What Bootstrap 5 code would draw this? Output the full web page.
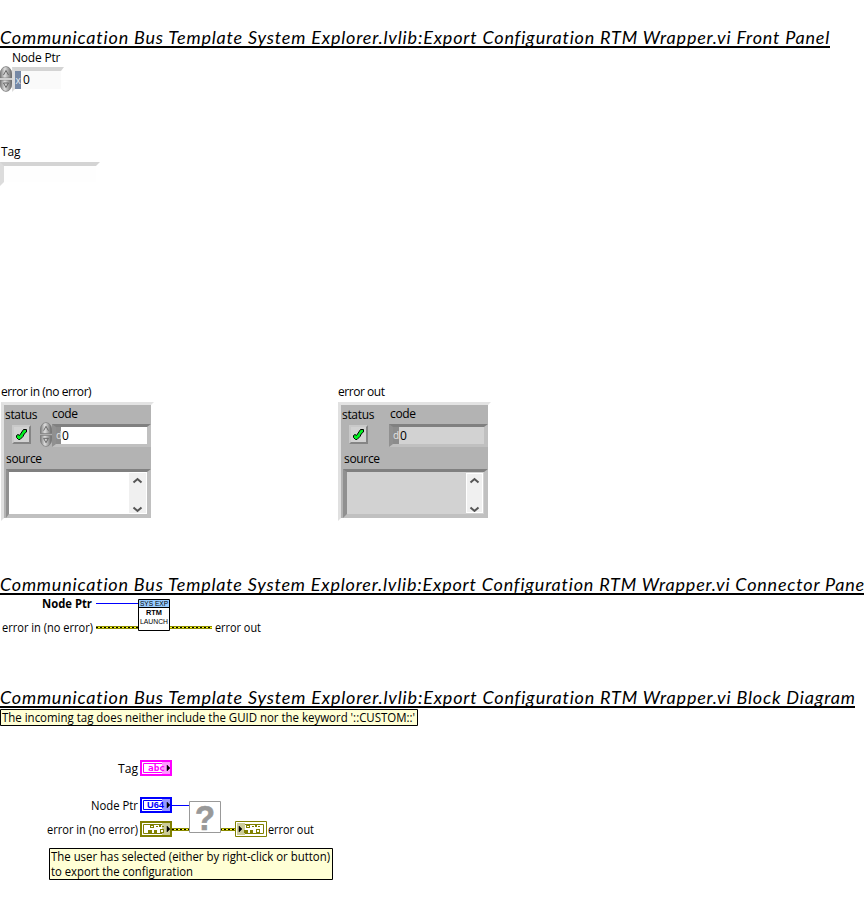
<!DOCTYPE html>
<html lang="en">
<head>
<meta charset="utf-8">
<title>Export Configuration RTM Wrapper.vi</title>
<link href="https://cdn.jsdelivr.net/npm/bootstrap@5.3.0/dist/css/bootstrap.min.css" rel="stylesheet">
<style>
body{width:864px;height:908px;overflow:hidden;background:#fff;color:#000;font:12px/16px "Open Sans","Noto Sans",sans-serif;letter-spacing:-.2px}
.vi-title{font:italic 18px/22px Lato,sans-serif;height:22px;border-bottom:2px solid #000;white-space:nowrap;width:max-content}
.t-front{width:830px;letter-spacing:.808px}
.t-conn{width:864px;letter-spacing:.795px}
.t-block{width:855px;letter-spacing:.808px}
.front{height:526px}
.sunk-light{border:4px solid;border-color:#d4d4d4 #fff #fff #dcdcdc}
.ptr-field{width:52px;height:25px;border-width:4px 3px 3px;background:#fafafa;margin-top:1px}
.tag-field{width:100px;height:24px;background:#fefefe}
.radix{width:6px;color:#e4e9f2;background:#7588a5;line-height:18px;font-size:10px;text-align:center}
.val{line-height:17px;padding-left:2px}
.errors{letter-spacing:-.45px}
.cluster{width:153px;height:119px;border:3px solid;border-color:#e3e3e3 #fff #fff #e0e0e0;background:#b3b3b3;display:grid;grid-template-columns:48px 99px;grid-template-rows:19px 23px 22px 49px;letter-spacing:-.32px}
.sunk{border:3px solid;border-color:#808080 #c0c0c0 #c0c0c0 #909090}
.code-field{border-width:3px 4px 3px 4px;background:#fff}
.code-field .radix{width:5px;background:#8c8c8c;color:#e4e4e4;line-height:17px}
.source-field{grid-column:1/3;margin-left:2px;border-width:3px 4px 4px 3px;background:#fff}
.readonly .code-field,.readonly .source-field{background:#d2d2d2}
.readonly .source-field{border-left-width:4px}
.readonly .code-field .radix{width:6px}
.led{width:19px;height:19px;border:2px solid;border-color:#c9c9c9 #858585 #858585 #c9c9c9;background:#d2d2d2;margin-left:8px}
.scroller{width:17px;background:#f0f0f0;margin:1px 1px 1px 0}
.readonly .scroller{outline:1px solid #fff;outline-offset:-1px}
svg{display:block}
svg text{fill:#000;letter-spacing:0}
.pix{font-family:"Liberation Sans","DejaVu Sans",sans-serif;font-weight:bold}
</style>
<script src="https://cdn.jsdelivr.net/npm/bootstrap@5.3.0/dist/js/bootstrap.bundle.min.js"></script>
</head>
<body>
<svg width="0" height="0" class="position-absolute">
<defs>
<linearGradient id="metal"><stop offset="0" stop-color="#777"/><stop offset=".4" stop-color="#dedede"/><stop offset="1" stop-color="#666"/></linearGradient>
<symbol id="spin" viewBox="0 0 12 26"><path d="M0 12V9Q0 4 3 1.500Q6-.5 9 1.500Q12 4 12 9v3zM0 14h12v3q0 5-3 7.500q-3 2-6 0Q0 22 0 17z" fill="url(#metal)" stroke="#777" stroke-width=".7"/><path d="M3.500 9L6 4.500 8.500 9M3.500 17h5L6 21.500z" fill="none" stroke="#666"/></symbol>
<symbol id="check" viewBox="0 0 15 15"><path d="M2.500 8.500L4 7.500 5.500 8.500 9.500 2.500H12.500V5L10.500 6.500 9 9.500 6 12.500H4.500L2.500 10.500z" fill="#00f020" stroke="#000"/></symbol>
<symbol id="arrows" viewBox="0 0 17 40"><path d="M4.500 9.500L8.500 6l4 3.500M4.500 34.500l4 3.500 4-3.500" fill="none" stroke="#555" stroke-width="2"/></symbol>
<pattern id="errwire" width="4" height="3" patternUnits="userSpaceOnUse"><path d="M0 0h4v3H0z" fill="#8a8a00"/><path d="M0 1h2v1H0z" fill="#000"/><path d="M2 1h2v1H2z" fill="#ffff20"/></pattern>
<g id="clusterglyph" fill="#808000"><path d="M10 4h4v3h-4zM8 9h4v3H8zM14 9h3v3h-3zM16 5h2v1h-2zM19 4h2v2h-2zM22 5h2v1h-2zM20 8h4v4h-4z"/><path d="M11 5h2v1h-2zM21 9h2v2h-2z" fill="#fff"/></g>
</defs>
</svg>
<main>
<section class="front overflow-hidden">
  <h2 class="vi-title t-front mb-0" style="margin-top:26px">Communication Bus Template System Explorer.lvlib:Export Configuration RTM Wrapper.vi Front Panel</h2>
  <div style="padding:2px 0 0 12px">Node Ptr</div>
  <div class="d-flex">
    <svg width="12" height="26"><use href="#spin"/></svg>
    <div class="sunk-light ptr-field d-flex"><span class="radix">x</span><span class="val">0</span></div>
  </div>
  <div style="padding:52px 0 0 1px">Tag</div>
  <div class="sunk-light tag-field" style="margin-top:2px"></div>
  <div class="d-flex errors" style="margin-top:198px;gap:184px;padding-left:1px">
    <div><div>error in (no error)</div>
      <div class="cluster" style="margin-top:2px">
        <div style="padding:2px 0 0 1px">status</div><div style="padding-top:1px">code</div>
        <div class="d-flex"><div class="led" style="margin-top:1px"><svg width="15" height="15"><use href="#check"/></svg></div><svg width="12" height="25" style="margin:-2px 0 0 9px"><use href="#spin"/></svg></div>
        <div class="sunk code-field d-flex"><span class="radix">d</span><span class="val" style="padding-left:1px">0</span></div>
        <div style="padding:4px 0 0 2px">source</div><div></div>
        <div class="sunk source-field d-flex justify-content-end"><svg class="scroller" height="40"><use href="#arrows" width="17" height="40"/></svg></div>
      </div></div>
    <div class="readonly"><div>error out</div>
      <div class="cluster" style="margin-top:2px">
        <div style="padding:2px 0 0 1px">status</div><div style="padding:1px 0 0 1px">code</div>
        <div><div class="led" style="margin-top:1px"><svg width="15" height="15"><use href="#check"/></svg></div></div>
        <div class="sunk code-field d-flex"><span class="radix">d</span><span class="val" style="padding-left:1px">0</span></div>
        <div style="padding:4px 0 0 3px">source</div><div></div>
        <div class="sunk source-field d-flex justify-content-end"><svg class="scroller" height="40"><use href="#arrows" width="17" height="40"/></svg></div>
      </div></div>
  </div>
</section>
<section>
  <h2 class="vi-title t-conn mb-0" style="margin-top:47px">Communication Bus Template System Explorer.lvlib:Export Configuration RTM Wrapper.vi Connector Pane</h2>
  <svg width="864" height="91" viewBox="0 595 864 91">
    <text x="42" y="608" font-weight="bold" textLength="50" lengthAdjust="spacingAndGlyphs">Node Ptr</text>
    <path d="M96 603h42v1H96z" fill="#00f"/>
    <text x="2" y="632" textLength="91" lengthAdjust="spacingAndGlyphs">error in (no error)</text>
    <g transform="translate(96 626)"><path d="M0 0h116v3H0z" fill="url(#errwire)"/></g>
    <path d="M138.500 599.500h31v31h-31z" fill="#fff" stroke="#000"/><path d="M139 600h30v7h-30z" fill="#99ccff"/><path d="M139 607h30v1h-30z" fill="#000"/>
    <g class="pix" font-size="7"><text x="140" y="606" textLength="28" lengthAdjust="spacingAndGlyphs" style="font-weight:normal">SYS EXP</text><text x="146" y="615" textLength="16" lengthAdjust="spacingAndGlyphs">RTM</text><text x="140" y="624" textLength="28" lengthAdjust="spacingAndGlyphs" style="font-weight:normal">LAUNCH</text></g>
    <text x="215" y="632" textLength="46" lengthAdjust="spacingAndGlyphs">error out</text>
  </svg>
</section>
<section>
  <h2 class="vi-title t-block mb-0">Communication Bus Template System Explorer.lvlib:Export Configuration RTM Wrapper.vi Block Diagram</h2>
  <svg width="864" height="200" viewBox="0 708 864 200">
    <path d="M.5 709.500h417v16H.5zM49.500 848.500h283v31h-283z" fill="#ffffd5" stroke="#000"/>
    <text x="2" y="722" textLength="413" lengthAdjust="spacingAndGlyphs">The incoming tag does neither include the GUID nor the keyword '::CUSTOM::'</text>
    <text x="51" y="861" textLength="279" lengthAdjust="spacingAndGlyphs">The user has selected (either by right-click or button)</text>
    <text x="51" y="876" textLength="142" lengthAdjust="spacingAndGlyphs">to export the configuration</text>
    <text x="118" y="773" textLength="20" lengthAdjust="spacingAndGlyphs">Tag</text>
    <text x="91" y="810" textLength="47" lengthAdjust="spacingAndGlyphs">Node Ptr</text>
    <text x="47" y="834" textLength="91" lengthAdjust="spacingAndGlyphs">error in (no error)</text>
    <text x="268" y="834" textLength="46" lengthAdjust="spacingAndGlyphs">error out</text>
    <g fill="#fff">
      <g stroke="#f0f"><path d="M141 761h30v14h-30z" stroke-width="2"/><path d="M143.500 763.500h25v9h-25z"/><path d="M162 762h8v12h-8z" fill="#ff99ff" stroke="none"/></g>
      <g stroke="#00f"><path d="M141 798h30v14h-30z" stroke-width="2"/><path d="M143.500 800.500h25v9h-25z"/><path d="M162 799h8v12h-8z" fill="#9999ff" stroke="none"/></g>
      <g stroke="#808000"><path d="M141 822h30v14h-30z" stroke-width="2"/><path d="M143.500 824.500h25v9h-25z"/><path d="M162 823h8v12h-8z" fill="#cccc99" stroke="none"/></g>
      <g stroke="#808000"><path d="M235.500 821.500h31v15h-31z"/><path d="M238.500 824.500h25v9h-25z"/><path d="M237 823h8v12h-8z" fill="#cccc99" stroke="none"/></g>
    </g>
    <use href="#clusterglyph" x="140" y="821"/><use href="#clusterglyph" x="236" y="821"/>
    <g class="pix"><text x="148" y="771" font-size="8.500" textLength="17" lengthAdjust="spacingAndGlyphs" style="fill:#f0f;font-family:'DejaVu Sans Mono',monospace">abc</text><text x="147" y="808" font-size="9" textLength="17" lengthAdjust="spacingAndGlyphs" style="fill:#00f">U64</text></g>
    <path d="M167 765v6l3-3zM167 802v6l3-3zM167 826v6l3-3zM239 826v6l3-3z" fill="#000" stroke="#000" stroke-width=".5"/>
    <path d="M172 805h17v1h-17z" fill="#00f"/>
    <g transform="translate(172 828)"><path d="M0 0h17v3H0zM49 0h14v3H49z" fill="url(#errwire)"/></g>
    <path d="M189.500 801.500h31v31h-31z" fill="#fff" stroke="#999"/>
    <text x="195" y="829.500" textLength="20" lengthAdjust="spacingAndGlyphs" style="font:bold 35px 'Liberation Sans',sans-serif;fill:#999;stroke:#999;stroke-width:.7">?</text>
  </svg>
</section>
</main>
</body>
</html>
